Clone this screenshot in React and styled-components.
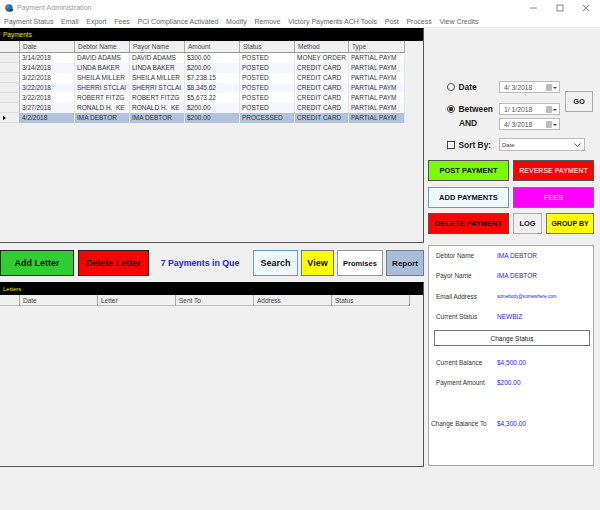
import React from 'react'
import styled, { createGlobalStyle } from 'styled-components'

const payments = [
  ['3/14/2018', 'DAVID ADAMS', 'DAVID ADAMS', '$300.00', 'POSTED', 'MONEY ORDER', 'PARTIAL PAYM'],
  ['3/14/2018', 'LINDA BAKER', 'LINDA BAKER', '$200.00', 'POSTED', 'CREDIT CARD', 'PARTIAL PAYM'],
  ['3/22/2018', 'SHEILA MILLER', 'SHEILA MILLER', '$7,238.15', 'POSTED', 'CREDIT CARD', 'PARTIAL PAYM'],
  ['3/22/2018', 'SHERRI STCLAI', 'SHERRI STCLAI', '$8,345.62', 'POSTED', 'CREDIT CARD', 'PARTIAL PAYM'],
  ['3/22/2018', 'ROBERT FITZG', 'ROBERT FITZG', '$5,673.22', 'POSTED', 'CREDIT CARD', 'PARTIAL PAYM'],
  ['3/27/2018', 'RONALD H.  KE', 'RONALD H.  KE', '$200.00', 'POSTED', 'CREDIT CARD', 'PARTIAL PAYM'],
  ['4/2/2018', 'IMA DEBTOR', 'IMA DEBTOR', '$200.00', 'PROCESSED', 'CREDIT CARD', 'PARTIAL PAYM'],
]

const paymentCols = ['Date', 'Debtor Name', 'Payor Name', 'Amount', 'Status', 'Method', 'Type']
const letterCols = ['Date', 'Letter', 'Sent To', 'Address', 'Status']
const menus = ['Payment Status', 'Email', 'Export', 'Fees', 'PCI Compliance Activated', 'Modify', 'Remove', 'Victory Payments ACH Tools', 'Post', 'Process', 'View Credits']

export default function App() {
  return (
    <Window>
      <GlobalStyle />
      <TitleBar>
        <AppIcon viewBox="0 0 12 12">
          <circle cx="6" cy="6" r="4.5" fill="#2f6fa8" />
          <path d="M3 3.5c1.5-1.5 3-1 3.5 0S5 6 4 6 2.500 4.500 3 3.500z" fill="#4f9a4a" />
          <path d="M6 10c2 1 4.500 0 5-1.500S8 7 7 8s-2 1.500-1 2z" fill="#1c3f66" />
        </AppIcon>
        <TitleText>Payment Administration</TitleText>
        <WindowControls>
          <svg width="8" height="8" viewBox="0 0 8 8"><path d="M0 4h7" stroke="#888" /></svg>
          <svg width="8" height="8" viewBox="0 0 8 8"><rect x="1" y="1" width="6" height="6" fill="none" stroke="#888" /></svg>
          <svg width="8" height="8" viewBox="0 0 8 8"><path d="M1 1l6 6M7 1l-6 6" stroke="#888" /></svg>
        </WindowControls>
      </TitleBar>
      <MenuBar>
        {menus.map(m => <MenuItem key={m}>{m}</MenuItem>)}
      </MenuBar>
      <Body>
        <LeftColumn>
          <Panel $height={215} $top={1}>
            <PanelTitle>Payments</PanelTitle>
            <GridHeader $cols="20px 55px 55px 55px 55px 55px 54px 56px">
              <HeaderCell />
              {paymentCols.map(c => <HeaderCell key={c}>{c}</HeaderCell>)}
            </GridHeader>
            {payments.map((row, i) => (
              <DataRow key={i} $alt={i % 2 === 1} $selected={i === 6}>
                <RowHead>{i === 6 && <Arrow />}</RowHead>
                {row.map((v, j) => <DataCell key={j}>{v}</DataCell>)}
              </DataRow>
            ))}
          </Panel>
          <ActionBar>
            <ActionButton $w={74} $bg="#32cd32" $line="#222">Add Letter</ActionButton>
            <ActionButton $w={71} $bg="#ff0000" $line="#222" $ml={4}>Delete Letter</ActionButton>
            <QueueText>7 Payments in Que</QueueText>
            <ActionButton $w={45} $bg="#f0f8ff" $line="#6a9bc4">Search</ActionButton>
            <ActionButton $w={33} $bg="#ffff00" $line="#777" $ml={3}>View</ActionButton>
            <ActionButton $w={46} $bg="#fff" $line="#999" $ml={3} $size={7.5}>Promises</ActionButton>
            <ActionButton $w={38} $bg="#a9bcd8" $line="#708090" $ml={3} $size={8}>Report</ActionButton>
          </ActionBar>
          <Panel $height={185}>
            <PanelTitle $small>Letters</PanelTitle>
            <GridHeader $cols="20px 78px 78px 78px 78px 78px" $light>
              <HeaderCell />
              {letterCols.map(c => <HeaderCell key={c}>{c}</HeaderCell>)}
            </GridHeader>
          </Panel>
        </LeftColumn>

        <RightColumn>
          <Filters>
            <Choice>
              <Radio />
              <ChoiceLabel>Date</ChoiceLabel>
            </Choice>
            <DateField>4/ 3/2018<Picker /></DateField>
            <GoButton>GO</GoButton>
            <Choice $top={10}>
              <Radio $on />
              <ChoiceLabel>Between</ChoiceLabel>
            </Choice>
            <DateField $top={10}>1/ 1/2018<Picker /></DateField>
            <AndLabel>AND</AndLabel>
            <DateField $top={3}>4/ 3/2018<Picker /></DateField>
          </Filters>
          <SortRow>
            <Check />
            <ChoiceLabel>Sort By:</ChoiceLabel>
            <SortSelect>
              Date
              <svg width="7" height="4" viewBox="0 0 7 4"><path d="M.5.500l3 3 3-3" fill="none" stroke="#555" /></svg>
            </SortSelect>
          </SortRow>
          <ButtonRow>
            <CmdButton $w={81} $bg="#7cfc00" $line="#555" $fg="#111">POST PAYMENT</CmdButton>
            <CmdButton $w={81} $bg="#ff0000" $line="#555" $fg="#ffc8c8" $size={7}>REVERSE PAYMENT</CmdButton>
          </ButtonRow>
          <ButtonRow>
            <CmdButton $w={81} $bg="#f0f8ff" $line="#6a9bc4" $fg="#111">ADD PAYMENTS</CmdButton>
            <CmdButton $w={81} $bg="#ff00ff" $line="#777" $fg="#ffb0ff">FEES</CmdButton>
          </ButtonRow>
          <ButtonRow>
            <CmdButton $w={81} $bg="#ff0000" $line="#555" $fg="#000">DELETE PAYMENT</CmdButton>
            <CmdButton $w={29} $bg="#f0f0f0" $line="#aaa" $fg="#111">LOG</CmdButton>
            <CmdButton $w={48} $bg="#ffff00" $line="#777" $fg="#111" $size={7}>GROUP BY</CmdButton>
          </ButtonRow>
          <SummaryCard>
            <InfoRow><InfoLabel>Debtor Name</InfoLabel><InfoValue>IMA DEBTOR</InfoValue></InfoRow>
            <InfoRow><InfoLabel>Payor Name</InfoLabel><InfoValue>IMA DEBTOR</InfoValue></InfoRow>
            <InfoRow><InfoLabel>Email Address</InfoLabel><InfoValue $size={4.6}>somebody@somewhere.com</InfoValue></InfoRow>
            <InfoRow><InfoLabel>Current Status</InfoLabel><InfoValue>NEWBIZ</InfoValue></InfoRow>
            <StatusButton>Change Status</StatusButton>
            <InfoRow><InfoLabel>Current Balance</InfoLabel><InfoValue>$4,500.00</InfoValue></InfoRow>
            <InfoRow><InfoLabel>Payment Amount</InfoLabel><InfoValue>$200.00</InfoValue></InfoRow>
            <ChangeRow><ChangeLabel>Change Balance To</ChangeLabel><InfoValue>$4,300.00</InfoValue></ChangeRow>
          </SummaryCard>
        </RightColumn>
      </Body>
    </Window>
  )
}

const GlobalStyle = createGlobalStyle`
  html, body {
    margin: 0;
    background: #f0f0f0;
  }
  * {
    box-sizing: border-box;
  }
`

const Window = styled.div`
  width: 600px;
  height: 510px;
  overflow: hidden;
  background: #f0f0f0;
  font-family: "Liberation Sans", Arial, sans-serif;
  font-size: 7px;
  color: #222;
`

const TitleBar = styled.div`
  height: 15px;
  background: #fff;
  display: flex;
  align-items: center;
  padding: 0 10px 0 4px;
`

const AppIcon = styled.svg`
  width: 10px;
  height: 10px;
  margin-right: 3px;
`

const TitleText = styled.div`
  font-size: 7.1px;
  color: #999;
`

const WindowControls = styled.div`
  margin-left: auto;
  display: flex;
  gap: 18px;
`

const MenuBar = styled.div`
  height: 12px;
  background: #fff;
  display: flex;
  align-items: center;
  padding-left: 4px;
  gap: 7.7px;
`

const MenuItem = styled.span`
  font-size: 7px;
  color: #666;
  white-space: nowrap;
`

const Body = styled.div`
  display: flex;
`

const LeftColumn = styled.div`
  width: 424px;
  flex: none;
`

const Panel = styled.div`
  height: ${p => p.$height}px;
  margin-top: ${p => p.$top || 0}px;
  border: 1px solid #555;
  border-top-color: #000;
  border-left: 0;
`

const PanelTitle = styled.div`
  height: 12px;
  background: #000;
  color: #e6e600;
  font-size: ${p => (p.$small ? 6 : 6.5)}px;
  line-height: 12px;
  padding-left: 3px;
`

const GridHeader = styled.div`
  display: grid;
  width: fit-content;
  grid-template-columns: ${p => p.$cols};
  height: ${p => (p.$light ? 11 : 12)}px;
  background: #f0f0f0;
  border-bottom: 1px solid ${p => (p.$light ? '#bbb' : '#999')};
`

const HeaderCell = styled.div`
  border-right: 1px solid #aaa;
  padding-left: 3px;
  font-size: 6.5px;
  line-height: 11px;
  color: #444;
  white-space: nowrap;
`

const DataRow = styled.div`
  display: grid;
  width: 405px;
  grid-template-columns: 20px 55px 55px 55px 55px 55px 54px 56px;
  height: 10px;
  background: ${p => (p.$selected ? '#b0c4de' : p.$alt ? '#f5f5ff' : '#fff')};
`

const RowHead = styled.div`
  background: #f0f0f0;
  border-right: 1px solid #bbb;
  border-bottom: 1px solid #ddd;
  display: flex;
  align-items: center;
  padding-left: 3px;
`

const Arrow = styled.span`
  width: 0;
  height: 0;
  border-left: 3px solid #000;
  border-top: 2px solid transparent;
  border-bottom: 2px solid transparent;
`

const DataCell = styled.div`
  padding-left: 2px;
  font-size: 6.5px;
  line-height: 10px;
  color: #333;
  white-space: pre;
  overflow: hidden;
  border-right: 1px solid #e6e6e6;
`

const ActionBar = styled.div`
  height: 39px;
  display: flex;
  align-items: center;
  padding-top: 1px;
`

const ActionButton = styled.div`
  width: ${p => p.$w}px;
  height: 26px;
  flex: none;
  margin-left: ${p => p.$ml || 0}px;
  background: ${p => p.$bg};
  border: 1px solid ${p => p.$line};
  display: flex;
  align-items: center;
  justify-content: center;
  font-size: ${p => p.$size || 9}px;
  font-weight: bold;
  color: #111;
  white-space: nowrap;
`

const QueueText = styled.div`
  width: 104px;
  flex: none;
  padding-right: 2px;
  text-align: center;
  font-size: 8.8px;
  font-weight: bold;
  color: #2222ff;
  white-space: nowrap;
`

const RightColumn = styled.div`
  width: 166px;
  margin-left: 4px;
  flex: none;
`

const Filters = styled.div`
  display: grid;
  grid-template-columns: 71px 61px 5px 28px;
  margin-top: 54px;
`

const Choice = styled.div`
  grid-column: 1;
  display: flex;
  align-items: center;
  height: 12px;
  margin-top: ${p => p.$top || 0}px;
  padding-left: 19px;
  gap: 3.5px;
`

const Radio = styled.span`
  width: 8px;
  height: 8px;
  border-radius: 50%;
  border: 1px solid #444;
  background: ${p => (p.$on ? 'radial-gradient(circle, #333 0 2px, #fff 2.5px)' : '#fff')};
  flex: none;
`

const ChoiceLabel = styled.span`
  font-size: 8.4px;
  font-weight: bold;
  color: #222;
  white-space: nowrap;
`

const AndLabel = styled(ChoiceLabel)`
  grid-column: 1;
  padding-left: 31px;
  margin-top: 1.5px;
  line-height: 12px;
`

const DateField = styled.div`
  grid-column: 2;
  height: 12px;
  margin-top: ${p => p.$top || 0}px;
  background: #fff;
  border: 1px solid #bbb;
  display: flex;
  align-items: center;
  justify-content: space-between;
  padding: 0 3px 0 4px;
  font-size: 6.8px;
  white-space: pre;
  color: #555;
`

const Picker = styled.span`
  width: 6px;
  height: 7px;
  background: #bbb;
  border-radius: 1px;
  margin-right: 4px;
  position: relative;
  &::after {
    content: '';
    position: absolute;
    left: 7px;
    top: 3px;
    border-left: 2px solid transparent;
    border-right: 2px solid transparent;
    border-top: 2px solid #444;
  }
`

const GoButton = styled.div`
  grid-column: 4;
  grid-row: 1 / span 3;
  align-self: start;
  height: 21px;
  margin-top: 10px;
  background: #f0f0f0;
  border: 1px solid #aaa;
  display: flex;
  align-items: center;
  justify-content: center;
  font-size: 7.5px;
  font-weight: bold;
`

const SortRow = styled.div`
  display: flex;
  align-items: center;
  height: 13px;
  margin-top: 8px;
  padding-left: 19px;
`

const Check = styled.span`
  width: 8px;
  height: 8px;
  background: #fff;
  border: 1px solid #444;
  margin-right: 3.5px;
  flex: none;
`

const SortSelect = styled.div`
  width: 86px;
  height: 13px;
  margin-left: auto;
  margin-right: 9px;
  background: #fff;
  border: 1px solid #bbb;
  display: flex;
  align-items: center;
  justify-content: space-between;
  padding: 0 3px 0 2px;
  font-size: 6px;
  color: #444;
`

const ButtonRow = styled.div`
  display: flex;
  gap: 4px;
  height: 21px;
  margin-top: 5.5px;
  ${SortRow} + & {
    margin-top: 9px;
  }
`

const CmdButton = styled.div`
  width: ${p => p.$w}px;
  flex: none;
  background: ${p => p.$bg};
  border: 1px solid ${p => p.$line};
  color: ${p => p.$fg};
  display: flex;
  align-items: center;
  justify-content: center;
  font-size: ${p => p.$size || 7.5}px;
  font-weight: bold;
  white-space: nowrap;
`

const SummaryCard = styled.div`
  width: 166px;
  height: 221px;
  margin-top: 11px;
  background: #fff;
  border: 1px solid #aaa;
  padding: 4px 4px 0 7px;
`

const InfoRow = styled.div`
  display: flex;
  align-items: flex-start;
  height: 20.4px;
  line-height: 12px;
`

const InfoLabel = styled.div`
  width: 61px;
  flex: none;
  font-size: 6.4px;
  color: #333;
  white-space: nowrap;
`

const ChangeLabel = styled(InfoLabel)`
  margin-left: -5px;
  width: 66px;
`

const ChangeRow = styled(InfoRow)`
  margin-top: 21px;
`

const InfoValue = styled.div`
  font-size: ${p => p.$size || 6.5}px;
  color: #2222ff;
  white-space: nowrap;
`

const StatusButton = styled.div`
  height: 16px;
  margin: -1.5px 0 10.5px -2px;
  width: 156px;
  background: #fff;
  border: 1px solid #777;
  display: flex;
  align-items: center;
  justify-content: center;
  font-size: 6.5px;
  color: #222;
`
